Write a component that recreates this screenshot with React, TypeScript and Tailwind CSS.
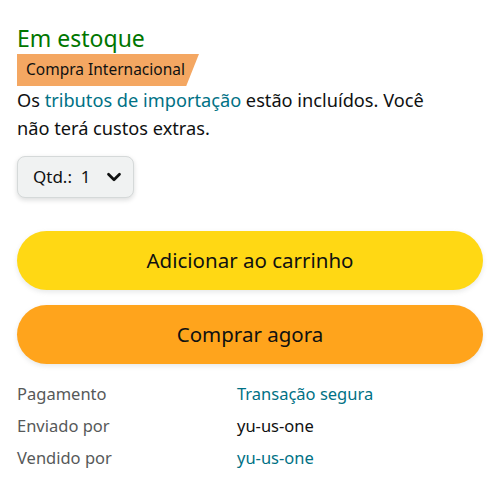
import { ChevronDown } from "lucide-react";

export default function App() {
  return (
    <main
      className="w-[500px] h-[487px] bg-white px-[17px] pt-[22px] text-[#0f1111]"
      style={{ fontFamily: '"Noto Sans", "Open Sans", sans-serif' }}
    >
      <h2 className="text-[23px] leading-[32px] text-[#007600]">Em estoque</h2>
      <div
        className="inline-flex h-[32px] items-center bg-[#f4a762] pl-[9px] pr-[14px] text-[15.5px]"
        style={{ clipPath: "polygon(0 0, 100% 0, 93% 100%, 0 100%)" }}
      >
        Compra Internacional
      </div>
      <p className="max-w-[440px] text-[18.2px] leading-[28px]">
        Os <span className="text-[#007185]">tributos de importação</span> estão incluídos. Você
        não terá custos extras.
      </p>
      <button className="mt-[14px] flex h-[42px] w-[117px] items-center gap-[12px] rounded-[8px] border border-[#d5d9d9] bg-[#f0f2f2] pl-[15px] text-[17px] shadow-[0_2px_5px_rgba(15,17,17,0.15)]">
        <span>Qtd.:&nbsp; 1</span>
        <ChevronDown size={22} strokeWidth={3} />
      </button>
      <div className="mt-[33px] flex flex-col gap-[15px]">
        <button className="h-[59px] w-full rounded-full bg-[#ffd814] text-[20.5px] shadow-[0_2px_5px_rgba(213,217,217,0.6)]">
          Adicionar ao carrinho
        </button>
        <button className="h-[59px] w-full rounded-full bg-[#ffa41c] text-[20.5px] shadow-[0_2px_5px_rgba(213,217,217,0.6)]">
          Comprar agora
        </button>
      </div>
      <div className="mt-[14px] grid grid-cols-[220px_1fr] text-[16.5px] leading-[32px]">
        <span className="text-[#565959]">Pagamento</span>
        <span className="text-[#007185]">Transação segura</span>
        <span className="text-[#565959]">Enviado por</span>
        <span>yu-us-one</span>
        <span className="text-[#565959]">Vendido por</span>
        <span className="text-[#007185]">yu-us-one</span>
      </div>
    </main>
  );
}
